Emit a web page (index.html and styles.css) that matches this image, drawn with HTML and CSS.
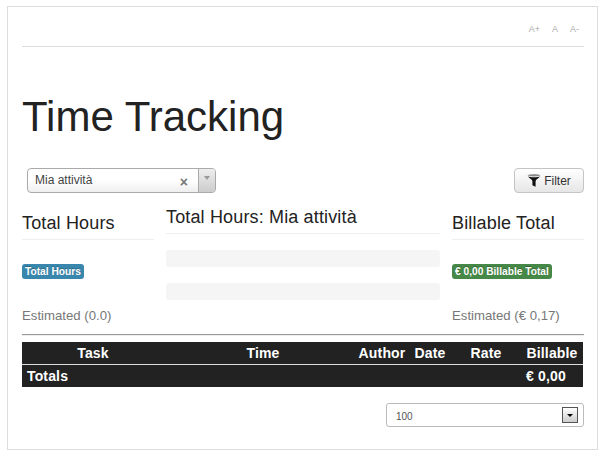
FILE: index.html
```html
<!DOCTYPE html>
<html lang="it">
<head>
    <meta charset="UTF-8">
    <title>Time Tracking</title>
    <link rel="stylesheet" href="styles.css">
</head>
<body>
    <div class="frame">
        <div class="font-sizes">
            <span>A+</span>
            <span>A</span>
            <span>A-</span>
        </div>
        <h1>Time Tracking</h1>

        <div class="toolbar">
            <div class="picker">
                <span class="picker-value">Mia attività</span>
                <span class="picker-clear">×</span>
                <span class="picker-arrow"></span>
            </div>
            <button type="button" class="filter-button">
                <svg class="funnel" width="14" height="13" viewBox="0 0 14 13"><path d="M.5 1.200 C3 -.2 11 -.2 13.500 1.200 C11 2.800 3 2.800 .5 1.200Z" fill="#888"/><path d="M.6 2.300 C3 3.600 11 3.600 13.400 2.300 C11.800 4.400 9 5.200 8.600 7 V12.800 L5.400 11.200 V7 C5 5.200 2.200 4.400 .6 2.300Z" fill="#111"/></svg>
                Filter
            </button>
        </div>

        <div class="columns">
            <div class="side-col">
                <h3>Total Hours</h3>
                <span class="badge badge-blue">Total Hours</span>
                <p class="estimated">Estimated (0.0)</p>
            </div>
            <div class="mid-col">
                <h3>Total Hours: Mia attività</h3>
                <div class="bar"></div>
                <div class="bar"></div>
            </div>
            <div class="side-col">
                <h3>Billable Total</h3>
                <span class="badge badge-green">€ 0,00 Billable Total</span>
                <p class="estimated">Estimated (€ 0,17)</p>
            </div>
        </div>

        <hr class="rule">

        <table class="entries">
            <thead>
                <tr>
                    <th class="col-task">Task</th>
                    <th class="col-time">Time</th>
                    <th class="col-author">Author</th>
                    <th class="col-date">Date</th>
                    <th class="col-rate">Rate</th>
                    <th class="col-billable">Billable</th>
                </tr>
            </thead>
            <tbody>
                <tr>
                    <td colspan="5" class="totals-label">Totals</td>
                    <td class="totals-value">€ 0,00</td>
                </tr>
            </tbody>
        </table>

        <div class="pager">
            <div class="page-size">
                <span class="page-size-value">100</span>
                <span class="page-size-btn"></span>
            </div>
        </div>
    </div>
</body>
</html>
```

FILE: styles.css
```css
body {
    margin: 6px 0 0 7px;
    font-family: "Liberation Sans", Arial, sans-serif;
    color: #222;
    background: #fff;
}
.frame {
    box-sizing: border-box;
    width: 591px;
    height: 444px;
    padding: 0 13px 0 14px;
    border: 1px solid #ddd;
}
.font-sizes {
    box-sizing: border-box;
    height: 40px;
    padding: 17px 5px 0 0;
    border-bottom: 1px solid #ddd;
    display: flex;
    justify-content: flex-end;
    gap: 12px;
    font-size: 9px;
    line-height: 10px;
    color: #aaa;
}
h1 {
    margin: 47px 0 28px;
    font-size: 42px;
    font-weight: normal;
    line-height: 46px;
    color: #222;
}
.toolbar {
    display: flex;
    justify-content: space-between;
    padding-left: 5px;
}
.picker {
    box-sizing: border-box;
    width: 189px;
    height: 25px;
    display: flex;
    align-items: center;
    padding-left: 7px;
    border: 1px solid #aaa;
    border-radius: 4px;
    background: linear-gradient(to bottom, #fff 50%, #eee);
    font-size: 12px;
    color: #444;
}
.picker-value {
    flex: 1;
    margin-top: -2px;
}
.picker-clear {
    margin: 2px 10px 0 0;
    font-size: 14px;
    font-weight: bold;
    color: #777;
}
.picker-arrow {
    position: relative;
    width: 16px;
    height: 23px;
    border-left: 1px solid #aaa;
    border-radius: 0 3px 3px 0;
    background: linear-gradient(to bottom, #eee, #ccc);
}
.picker-arrow::after {
    content: "";
    position: absolute;
    left: 5px;
    top: 7px;
    border: 3px solid transparent;
    border-top: 4px solid #999;
}
.filter-button {
    box-sizing: border-box;
    width: 70px;
    height: 25px;
    display: flex;
    align-items: center;
    justify-content: center;
    gap: 3px;
    padding: 0;
    border: 1px solid #c4c4c4;
    border-radius: 4px;
    background: linear-gradient(to bottom, #fff, #e6e6e6);
    font-family: inherit;
    font-size: 12px;
    color: #333;
}
.columns {
    display: grid;
    grid-template-columns: 132px 274px 132px;
    gap: 12px;
    margin-top: 12px;
}
.side-col {
    padding-top: 6px;
}
h3 {
    margin: 0;
    padding-bottom: 4px;
    border-bottom: 1px solid #eee;
    font-size: 18px;
    font-weight: normal;
    letter-spacing: 0.15px;
    line-height: 24px;
    color: #222;
}
.badge {
    display: block;
    width: fit-content;
    margin-top: 24px;
    padding: 0 3px;
    border-radius: 3px;
    font-size: 10.2px;
    font-weight: bold;
    line-height: 15px;
    color: #fff;
    text-shadow: 0 -1px 0 rgba(0, 0, 0, 0.25);
}
.badge-blue {
    background: #3a87ad;
}
.badge-green {
    background: #468847;
}
.estimated {
    margin: 27px 0 0;
    font-size: 13.2px;
    line-height: 20px;
    color: #777;
}
.bar {
    height: 17px;
    margin-top: 16px;
    border-radius: 3px;
    background: #f5f5f5;
}
.rule {
    height: 0;
    margin: 8px 0 6px;
    border: 0;
    border-top: 1px solid #999;
    border-bottom: 1px solid #eee;
}
.entries {
    width: 561px;
    border-collapse: collapse;
    table-layout: fixed;
    background: #222;
    color: #fff;
    font-size: 14px;
    font-weight: bold;
    letter-spacing: 0.15px;
}
.entries th,
.entries td {
    height: 22px;
    padding: 0;
    text-align: center;
    line-height: 22px;
}
.entries thead tr {
    border-bottom: 1px solid #ddd;
}
.entries th.col-task {
    box-sizing: border-box;
    width: 149px;
    padding: 0 12px 0 5px;
}
.col-time {
    width: 184px;
}
.col-author {
    width: 54px;
}
.col-date {
    width: 42px;
}
.col-rate {
    width: 70px;
}
.entries td.totals-label,
.entries td.totals-value {
    padding-left: 5px;
    text-align: left;
}
.pager {
    display: flex;
    justify-content: flex-end;
    margin-top: 16px;
}
.page-size {
    box-sizing: border-box;
    width: 198px;
    height: 24px;
    display: flex;
    align-items: center;
    justify-content: space-between;
    padding: 0 5px 0 9px;
    border: 1px solid #bbb;
    border-radius: 3px;
    font-size: 10px;
    color: #555;
}
.page-size-value {
    margin-top: 2px;
}
.page-size-btn {
    box-sizing: border-box;
    position: relative;
    width: 16px;
    height: 16px;
    border: 1px solid #555;
    background: linear-gradient(to bottom, #fff, #ccc);
}
.page-size-btn::after {
    content: "";
    position: absolute;
    left: 4px;
    top: 6px;
    border: 3px solid transparent;
    border-top: 3px solid #000;
}
```
